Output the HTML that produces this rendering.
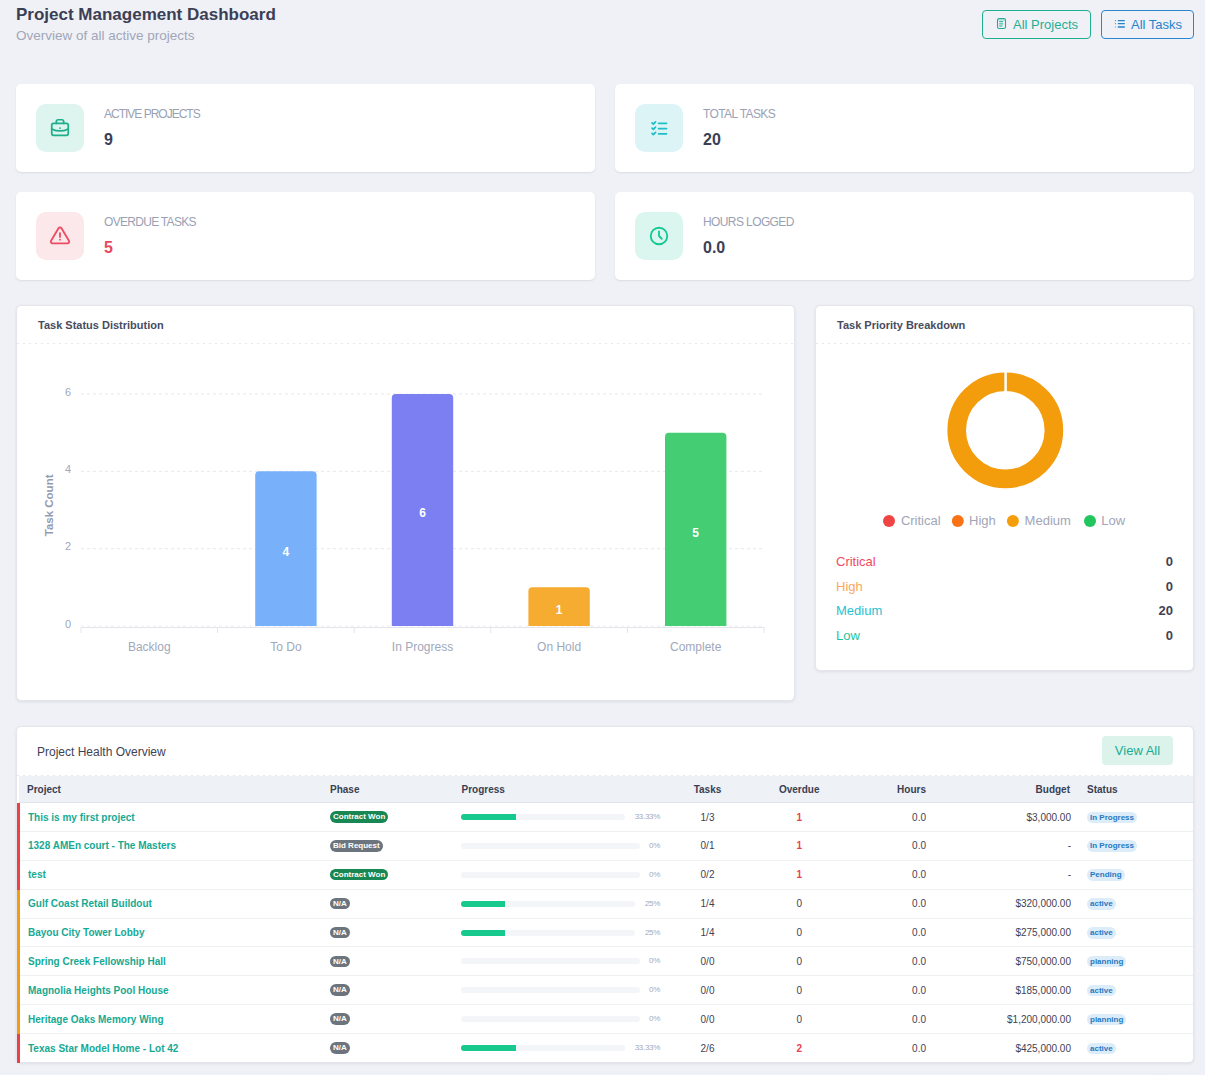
<!DOCTYPE html>
<html><head><meta charset="utf-8">
<style>
*{box-sizing:border-box;margin:0;padding:0}
html,body{width:1205px;height:1075px;overflow:hidden}
body{background:#f0f1f6;font-family:"Liberation Sans",sans-serif;color:#3f4254;position:relative}
.a{position:absolute;white-space:nowrap}
.card{position:absolute;background:#fff;border-radius:5px;box-shadow:0 1px 2px rgba(30,35,60,.10)}
.bcard{position:absolute;background:#fff;border-radius:5px;border:1px solid #e4e6eb;box-shadow:0 1px 3px rgba(30,35,60,.09)}
.ib{position:absolute;left:20px;top:20px;width:48px;height:48px;border-radius:10px}
.ib svg{position:absolute;left:12px;top:12px}
.lbl{position:absolute;left:88px;font-size:12px;color:#9aa1b4;letter-spacing:-0.6px;line-height:12px;top:23.8px}
.val{position:absolute;left:88px;font-size:16px;font-weight:bold;color:#3a3f56;line-height:16px;top:48px}
.btn{position:absolute;top:10px;height:29px;border:1px solid;border-radius:4px;font-size:13px;line-height:27px}
.btn svg{position:absolute}
.btn span{position:absolute}
.ctitle{position:absolute;left:20px;top:14px;font-size:11px;font-weight:bold;color:#484c60;line-height:11px}
.dash{position:absolute;left:0;right:0;height:1px;background-image:linear-gradient(to right,#e5e7eb 2.5px,transparent 2.5px);background-size:6px 1px}
.th{font-size:10px;font-weight:bold;color:#3a3f52;line-height:10px}
.td{font-size:10px;line-height:10px;color:#3f4254}
.pn{font-weight:bold;color:#16a993}
.bdg{font-size:8px;font-weight:bold;line-height:11.5px;height:11.5px;padding:0 3px;border-radius:6px}
.pct{font-size:8px;line-height:8px;letter-spacing:-0.3px;color:#a5a9b9}
</style></head><body>

<!-- Header -->
<div class="a" style="left:16px;top:6px;font-size:17px;font-weight:bold;line-height:17px;color:#3b3f55">Project Management Dashboard</div>
<div class="a" style="left:16px;top:29px;font-size:13.5px;line-height:14px;color:#a1a6b8">Overview of all active projects</div>

<div class="btn" style="left:982px;width:109px;border-color:#21ad8f;color:#1fae93">
  <svg style="left:13px;top:6px" width="12" height="13" viewBox="996 17 12 13"><rect x="997.5" y="18.5" width="8" height="10" rx="1.6" fill="none" stroke="#1fae93" stroke-width="1.1"/><rect x="998" y="19" width="7" height="1.6" fill="#1fae93" opacity=".35"/><path d="M999.2 21.7h3.9M999.2 23.9h3.9M999.2 26h3.2" stroke="#1fae93" stroke-width="1"/></svg>
  <span style="left:30px;top:0">All Projects</span>
</div>
<div class="btn" style="left:1101px;width:93px;border-color:#2b86cf;color:#2384cc">
  <svg style="left:11px;top:6px" width="12" height="13" viewBox="1113 17 12 13"><path d="M1117.8 20.6h7M1117.8 23.6h7M1117.8 27h7" stroke="#2384cc" stroke-width="1.3"/><path d="M1114.9 20.6h1M1114.9 23.6h1M1114.9 27h1" stroke="#2384cc" stroke-width="1.2" opacity=".8"/></svg>
  <span style="left:29px;top:0">All Tasks</span>
</div>

<!-- Stat cards -->
<div class="card" style="left:16px;top:84px;width:579px;height:88px">
  <div class="ib" style="background:#def4ee">
    <svg style="left:13px;top:13px" width="22" height="22" viewBox="0 0 24 24" fill="none" stroke="#1dae8c" stroke-width="1.9" stroke-linecap="round" stroke-linejoin="round"><path d="M3 9a2 2 0 0 1 2 -2h14a2 2 0 0 1 2 2v9a2 2 0 0 1 -2 2h-14a2 2 0 0 1 -2 -2v-9z"/><path d="M8 7v-2a2 2 0 0 1 2 -2h4a2 2 0 0 1 2 2v2"/><path d="M12 12l0 .01"/><path d="M3 13a20 20 0 0 0 18 0"/></svg>
  </div>
  <div class="lbl" style="letter-spacing:-1px">ACTIVE PROJECTS</div>
  <div class="val">9</div>
</div>
<div class="card" style="left:615px;top:84px;width:579px;height:88px">
  <div class="ib" style="background:#ddf4f7">
    <svg style="left:14px;top:13.6px" width="21" height="21" viewBox="0 0 24 24" fill="none" stroke="#1bbfc6" stroke-width="2" stroke-linecap="round" stroke-linejoin="round"><path d="M3.5 5.5l1.5 1.5l2.5 -2.5"/><path d="M3.5 11.5l1.5 1.5l2.5 -2.5"/><path d="M3.5 17.5l1.5 1.5l2.5 -2.5"/><path d="M11 6l9 0"/><path d="M11 12l9 0"/><path d="M11 18l9 0"/></svg>
  </div>
  <div class="lbl">TOTAL TASKS</div>
  <div class="val">20</div>
</div>
<div class="card" style="left:16px;top:192px;width:579px;height:88px">
  <div class="ib" style="background:#fce7ea">
    <svg style="left:13px;top:12.6px" width="22" height="22" viewBox="0 0 24 24" fill="none" stroke="#eb4d61" stroke-width="2" stroke-linecap="round" stroke-linejoin="round"><path d="M12 9v4"/><path d="M10.363 3.591l-8.106 13.534a1.914 1.914 0 0 0 1.636 2.871h16.214a1.914 1.914 0 0 0 1.636 -2.87l-8.106 -13.536a1.914 1.914 0 0 0 -3.274 0z"/><path d="M12 16h.01"/></svg>
  </div>
  <div class="lbl" style="letter-spacing:-0.7px">OVERDUE TASKS</div>
  <div class="val" style="color:#e8485f">5</div>
</div>
<div class="card" style="left:615px;top:192px;width:579px;height:88px">
  <div class="ib" style="background:#dbf6ee">
    <svg style="left:13.4px;top:13px" width="22" height="22" viewBox="0 0 24 24" fill="none" stroke="#14c990" stroke-width="2" stroke-linecap="round" stroke-linejoin="round"><path d="M3 12a9 9 0 1 0 18 0a9 9 0 0 0 -18 0"/><path d="M12 7v5l3 3"/></svg>
  </div>
  <div class="lbl">HOURS LOGGED</div>
  <div class="val">0.0</div>
</div>

<!-- CHART_CARD -->
<div class="bcard" style="left:16px;top:305px;width:779px;height:396px">
  <div class="ctitle" style="left:21px;top:14px">Task Status Distribution</div>
  <div class="dash" style="top:37px"></div>
</div>
<svg class="a" style="left:0;top:0" width="1205" height="1075" viewBox="0 0 1205 1075">
<line x1="81" y1="394.0" x2="764" y2="394.0" stroke="#e6e8ed" stroke-width="1" stroke-dasharray="3 3"/>
<line x1="81" y1="471.3" x2="764" y2="471.3" stroke="#e6e8ed" stroke-width="1" stroke-dasharray="3 3"/>
<line x1="81" y1="548.7" x2="764" y2="548.7" stroke="#e6e8ed" stroke-width="1" stroke-dasharray="3 3"/>
<line x1="81" y1="626.0" x2="764" y2="626.0" stroke="#eceef2" stroke-width="1" stroke-dasharray="3 3"/>
<path d="M255.20 626 V475.33 Q255.20 471.33 259.20 471.33 H312.60 Q316.60 471.33 316.60 475.33 V626 Z" fill="#78b1fa"/>
<text x="285.9" y="555.9" text-anchor="middle" font-size="12" font-weight="bold" fill="#fff">4</text>
<path d="M391.80 626 V398.00 Q391.80 394.00 395.80 394.00 H449.20 Q453.20 394.00 453.20 398.00 V626 Z" fill="#7b7ff2"/>
<text x="422.5" y="517.2" text-anchor="middle" font-size="12" font-weight="bold" fill="#fff">6</text>
<path d="M528.40 626 V591.33 Q528.40 587.33 532.40 587.33 H585.80 Q589.80 587.33 589.80 591.33 V626 Z" fill="#f6ac31"/>
<text x="559.1" y="613.9" text-anchor="middle" font-size="12" font-weight="bold" fill="#fff">1</text>
<path d="M665.00 626 V436.67 Q665.00 432.67 669.00 432.67 H722.40 Q726.40 432.67 726.40 436.67 V626 Z" fill="#45cd73"/>
<text x="695.7" y="536.5" text-anchor="middle" font-size="12" font-weight="bold" fill="#fff">5</text>
<line x1="81" y1="627.5" x2="764" y2="627.5" stroke="#e3e5ea" stroke-width="1"/>
<line x1="81.0" y1="627" x2="81.0" y2="633" stroke="#e3e5ea" stroke-width="1"/>
<line x1="217.6" y1="627" x2="217.6" y2="633" stroke="#e3e5ea" stroke-width="1"/>
<line x1="354.2" y1="627" x2="354.2" y2="633" stroke="#e3e5ea" stroke-width="1"/>
<line x1="490.8" y1="627" x2="490.8" y2="633" stroke="#e3e5ea" stroke-width="1"/>
<line x1="627.4" y1="627" x2="627.4" y2="633" stroke="#e3e5ea" stroke-width="1"/>
<line x1="764.0" y1="627" x2="764.0" y2="633" stroke="#e3e5ea" stroke-width="1"/>
<text x="149.3" y="651" text-anchor="middle" font-size="12" fill="#a1a8bb">Backlog</text>
<text x="285.9" y="651" text-anchor="middle" font-size="12" fill="#a1a8bb">To Do</text>
<text x="422.5" y="651" text-anchor="middle" font-size="12" fill="#a1a8bb">In Progress</text>
<text x="559.1" y="651" text-anchor="middle" font-size="12" fill="#a1a8bb">On Hold</text>
<text x="695.7" y="651" text-anchor="middle" font-size="12" fill="#a1a8bb">Complete</text>
<text x="71" y="395.5" text-anchor="end" font-size="11" fill="#a1a8bb">6</text>
<text x="71" y="472.8" text-anchor="end" font-size="11" fill="#a1a8bb">4</text>
<text x="71" y="550.2" text-anchor="end" font-size="11" fill="#a1a8bb">2</text>
<text x="71" y="627.5" text-anchor="end" font-size="11" fill="#a1a8bb">0</text>
<text transform="translate(53,505.4) rotate(-90)" text-anchor="middle" font-size="11.5" font-weight="bold" fill="#939ab0">Task Count</text>
</svg>
<!-- /CHART_CARD -->

<!-- PRIORITY_CARD -->
<div class="bcard" style="left:815px;top:305px;width:379px;height:366px">
  <div class="ctitle" style="left:21px;top:14px">Task Priority Breakdown</div>
  <div class="dash" style="top:37px"></div>
</div>
<svg class="a" style="left:815px;top:305px" width="379" height="366" viewBox="815 305 379 366">
<circle cx="1005.3" cy="430.3" r="48.60" fill="none" stroke="#f39c0c" stroke-width="18.60"/>
<line x1="1005.6" y1="371.4" x2="1005.6" y2="392" stroke="#fff" stroke-width="2.5"/>
<circle cx="889.0" cy="521" r="6" fill="#ef4444"/>
<text x="900.9" y="525.3" font-size="13" fill="#a1a5b7">Critical</text>
<circle cx="957.8" cy="521" r="6" fill="#f97316"/>
<text x="969.0" y="525.3" font-size="13" fill="#a1a5b7">High</text>
<circle cx="1012.9" cy="521" r="6" fill="#f59e0b"/>
<text x="1024.6" y="525.3" font-size="13" fill="#a1a5b7">Medium</text>
<circle cx="1090.0" cy="521" r="6" fill="#22c55e"/>
<text x="1101.2" y="525.3" font-size="13" fill="#a1a5b7">Low</text>
<text x="836" y="565.9" font-size="13" fill="#ee4a62">Critical</text>
<text x="1173" y="565.9" text-anchor="end" font-size="13" font-weight="bold" fill="#3f4254">0</text>
<text x="836" y="590.6" font-size="13" fill="#fba75c">High</text>
<text x="1173" y="590.6" text-anchor="end" font-size="13" font-weight="bold" fill="#3f4254">0</text>
<text x="836" y="615.0" font-size="13" fill="#29c2d1">Medium</text>
<text x="1173" y="615.0" text-anchor="end" font-size="13" font-weight="bold" fill="#3f4254">20</text>
<text x="836" y="639.9" font-size="13" fill="#1cc59f">Low</text>
<text x="1173" y="639.9" text-anchor="end" font-size="13" font-weight="bold" fill="#3f4254">0</text>
</svg>
<!-- /PRIORITY_CARD -->

<!-- TABLE_CARD -->
<div class="bcard" style="left:16px;top:726px;width:1178px;height:337px;overflow:hidden">
  <div class="a" style="left:20px;top:19px;font-size:12px;line-height:12px;color:#3f4254">Project Health Overview</div>
  <div class="a" style="left:1085px;top:9px;width:71px;height:29px;border-radius:4px;background:#dcf3ec;color:#19ad92;font-size:13px;line-height:29px;text-align:center">View All</div>
  <div class="dash" style="top:48px"></div>
</div>
<div class="a" style="left:19px;top:776px;width:1174px;height:27px;background:#eef1f6;border-bottom:1px solid #dfe3ea"></div>
<div class="a th" style="left:27px;top:784.5px">Project</div>
<div class="a th" style="left:330px;top:784.5px">Phase</div>
<div class="a th" style="left:461.5px;top:784.5px">Progress</div>
<div class="a th" style="left:647.5px;width:120px;text-align:center;top:784.5px">Tasks</div>
<div class="a th" style="left:739.2px;width:120px;text-align:center;top:784.5px">Overdue</div>
<div class="a th" style="left:806px;width:120px;text-align:right;top:784.5px">Hours</div>
<div class="a th" style="left:950px;width:120px;text-align:right;top:784.5px">Budget</div>
<div class="a th" style="left:1087px;top:784.5px">Status</div>
<div class="a" style="left:20px;top:803.000px;width:1173px;height:28.875px;border-bottom:1px solid #eef0f4;"></div><div class="a" style="left:17px;top:803.000px;width:3px;height:28.875px;background:#ee3e46"></div>
<div class="a td pn" style="left:28px;top:812.500px">This is my first project</div>
<div class="a bdg" style="left:330px;top:811.200px;background:#198754;color:#fff">Contract Won</div>
<div class="a" style="left:461px;top:814.000px;width:163.8px;height:6px;border-radius:3px;background:#f4f5f9;overflow:hidden"><div style="width:33.33%;height:6px;background:#17c98d"></div></div>
<div class="a pct" style="left:560px;width:100px;text-align:right;top:813.000px">33.33%</div>
<div class="a td" style="left:647.5px;width:120px;text-align:center;top:812.500px">1/3</div>
<div class="a td" style="left:739.2px;width:120px;text-align:center;top:812.500px;color:#ee3d4f;font-weight:bold">1</div>
<div class="a td" style="left:806px;width:120px;text-align:right;top:812.500px">0.0</div>
<div class="a td" style="left:871px;width:200px;text-align:right;top:812.500px">$3,000.00</div>
<div class="a bdg" style="left:1087px;top:811.500px;background:#dcecf8;color:#2679c2">In Progress</div>
<div class="a" style="left:20px;top:831.875px;width:1173px;height:28.875px;border-bottom:1px solid #eef0f4;"></div><div class="a" style="left:17px;top:831.875px;width:3px;height:28.875px;background:#ee3e46"></div>
<div class="a td pn" style="left:28px;top:841.375px">1328 AMEn court - The Masters</div>
<div class="a bdg" style="left:330px;top:840.075px;background:#6c757d;color:#fff">Bid Request</div>
<div class="a" style="left:461px;top:842.875px;width:178.5px;height:6px;border-radius:3px;background:#f4f5f9;overflow:hidden"><div style="width:0%;height:6px;background:#17c98d"></div></div>
<div class="a pct" style="left:560px;width:100px;text-align:right;top:841.875px">0%</div>
<div class="a td" style="left:647.5px;width:120px;text-align:center;top:841.375px">0/1</div>
<div class="a td" style="left:739.2px;width:120px;text-align:center;top:841.375px;color:#ee3d4f;font-weight:bold">1</div>
<div class="a td" style="left:806px;width:120px;text-align:right;top:841.375px">0.0</div>
<div class="a td" style="left:871px;width:200px;text-align:right;top:841.375px">-</div>
<div class="a bdg" style="left:1087px;top:840.375px;background:#dcecf8;color:#2679c2">In Progress</div>
<div class="a" style="left:20px;top:860.750px;width:1173px;height:28.875px;border-bottom:1px solid #eef0f4;"></div><div class="a" style="left:17px;top:860.750px;width:3px;height:28.875px;background:#ee3e46"></div>
<div class="a td pn" style="left:28px;top:870.250px">test</div>
<div class="a bdg" style="left:330px;top:868.950px;background:#198754;color:#fff">Contract Won</div>
<div class="a" style="left:461px;top:871.750px;width:178.5px;height:6px;border-radius:3px;background:#f4f5f9;overflow:hidden"><div style="width:0%;height:6px;background:#17c98d"></div></div>
<div class="a pct" style="left:560px;width:100px;text-align:right;top:870.750px">0%</div>
<div class="a td" style="left:647.5px;width:120px;text-align:center;top:870.250px">0/2</div>
<div class="a td" style="left:739.2px;width:120px;text-align:center;top:870.250px;color:#ee3d4f;font-weight:bold">1</div>
<div class="a td" style="left:806px;width:120px;text-align:right;top:870.250px">0.0</div>
<div class="a td" style="left:871px;width:200px;text-align:right;top:870.250px">-</div>
<div class="a bdg" style="left:1087px;top:869.250px;background:#dcecf8;color:#2679c2">Pending</div>
<div class="a" style="left:20px;top:889.625px;width:1173px;height:28.875px;border-bottom:1px solid #eef0f4;"></div><div class="a" style="left:17px;top:889.625px;width:3px;height:28.875px;background:#f39c12"></div>
<div class="a td pn" style="left:28px;top:899.125px">Gulf Coast Retail Buildout</div>
<div class="a bdg" style="left:330px;top:897.825px;background:#6c757d;color:#fff">N/A</div>
<div class="a" style="left:461px;top:900.625px;width:174.0px;height:6px;border-radius:3px;background:#f4f5f9;overflow:hidden"><div style="width:25%;height:6px;background:#17c98d"></div></div>
<div class="a pct" style="left:560px;width:100px;text-align:right;top:899.625px">25%</div>
<div class="a td" style="left:647.5px;width:120px;text-align:center;top:899.125px">1/4</div>
<div class="a td" style="left:739.2px;width:120px;text-align:center;top:899.125px;">0</div>
<div class="a td" style="left:806px;width:120px;text-align:right;top:899.125px">0.0</div>
<div class="a td" style="left:871px;width:200px;text-align:right;top:899.125px">$320,000.00</div>
<div class="a bdg" style="left:1087px;top:898.125px;background:#dcecf8;color:#2679c2">active</div>
<div class="a" style="left:20px;top:918.500px;width:1173px;height:28.875px;border-bottom:1px solid #eef0f4;"></div><div class="a" style="left:17px;top:918.500px;width:3px;height:28.875px;background:#f39c12"></div>
<div class="a td pn" style="left:28px;top:928.000px">Bayou City Tower Lobby</div>
<div class="a bdg" style="left:330px;top:926.700px;background:#6c757d;color:#fff">N/A</div>
<div class="a" style="left:461px;top:929.500px;width:174.0px;height:6px;border-radius:3px;background:#f4f5f9;overflow:hidden"><div style="width:25%;height:6px;background:#17c98d"></div></div>
<div class="a pct" style="left:560px;width:100px;text-align:right;top:928.500px">25%</div>
<div class="a td" style="left:647.5px;width:120px;text-align:center;top:928.000px">1/4</div>
<div class="a td" style="left:739.2px;width:120px;text-align:center;top:928.000px;">0</div>
<div class="a td" style="left:806px;width:120px;text-align:right;top:928.000px">0.0</div>
<div class="a td" style="left:871px;width:200px;text-align:right;top:928.000px">$275,000.00</div>
<div class="a bdg" style="left:1087px;top:927.000px;background:#dcecf8;color:#2679c2">active</div>
<div class="a" style="left:20px;top:947.375px;width:1173px;height:28.875px;border-bottom:1px solid #eef0f4;"></div><div class="a" style="left:17px;top:947.375px;width:3px;height:28.875px;background:#f39c12"></div>
<div class="a td pn" style="left:28px;top:956.875px">Spring Creek Fellowship Hall</div>
<div class="a bdg" style="left:330px;top:955.575px;background:#6c757d;color:#fff">N/A</div>
<div class="a" style="left:461px;top:958.375px;width:178.5px;height:6px;border-radius:3px;background:#f4f5f9;overflow:hidden"><div style="width:0%;height:6px;background:#17c98d"></div></div>
<div class="a pct" style="left:560px;width:100px;text-align:right;top:957.375px">0%</div>
<div class="a td" style="left:647.5px;width:120px;text-align:center;top:956.875px">0/0</div>
<div class="a td" style="left:739.2px;width:120px;text-align:center;top:956.875px;">0</div>
<div class="a td" style="left:806px;width:120px;text-align:right;top:956.875px">0.0</div>
<div class="a td" style="left:871px;width:200px;text-align:right;top:956.875px">$750,000.00</div>
<div class="a bdg" style="left:1087px;top:955.875px;background:#dcecf8;color:#2679c2">planning</div>
<div class="a" style="left:20px;top:976.250px;width:1173px;height:28.875px;border-bottom:1px solid #eef0f4;"></div><div class="a" style="left:17px;top:976.250px;width:3px;height:28.875px;background:#f39c12"></div>
<div class="a td pn" style="left:28px;top:985.750px">Magnolia Heights Pool House</div>
<div class="a bdg" style="left:330px;top:984.450px;background:#6c757d;color:#fff">N/A</div>
<div class="a" style="left:461px;top:987.250px;width:178.5px;height:6px;border-radius:3px;background:#f4f5f9;overflow:hidden"><div style="width:0%;height:6px;background:#17c98d"></div></div>
<div class="a pct" style="left:560px;width:100px;text-align:right;top:986.250px">0%</div>
<div class="a td" style="left:647.5px;width:120px;text-align:center;top:985.750px">0/0</div>
<div class="a td" style="left:739.2px;width:120px;text-align:center;top:985.750px;">0</div>
<div class="a td" style="left:806px;width:120px;text-align:right;top:985.750px">0.0</div>
<div class="a td" style="left:871px;width:200px;text-align:right;top:985.750px">$185,000.00</div>
<div class="a bdg" style="left:1087px;top:984.750px;background:#dcecf8;color:#2679c2">active</div>
<div class="a" style="left:20px;top:1005.125px;width:1173px;height:28.875px;border-bottom:1px solid #eef0f4;"></div><div class="a" style="left:17px;top:1005.125px;width:3px;height:28.875px;background:#f39c12"></div>
<div class="a td pn" style="left:28px;top:1014.625px">Heritage Oaks Memory Wing</div>
<div class="a bdg" style="left:330px;top:1013.325px;background:#6c757d;color:#fff">N/A</div>
<div class="a" style="left:461px;top:1016.125px;width:178.5px;height:6px;border-radius:3px;background:#f4f5f9;overflow:hidden"><div style="width:0%;height:6px;background:#17c98d"></div></div>
<div class="a pct" style="left:560px;width:100px;text-align:right;top:1015.125px">0%</div>
<div class="a td" style="left:647.5px;width:120px;text-align:center;top:1014.625px">0/0</div>
<div class="a td" style="left:739.2px;width:120px;text-align:center;top:1014.625px;">0</div>
<div class="a td" style="left:806px;width:120px;text-align:right;top:1014.625px">0.0</div>
<div class="a td" style="left:871px;width:200px;text-align:right;top:1014.625px">$1,200,000.00</div>
<div class="a bdg" style="left:1087px;top:1013.625px;background:#dcecf8;color:#2679c2">planning</div>
<div class="a" style="left:20px;top:1034.000px;width:1173px;height:28.875px;"></div><div class="a" style="left:17px;top:1034.000px;width:3px;height:28.875px;background:#ee3e46"></div>
<div class="a td pn" style="left:28px;top:1043.500px">Texas Star Model Home - Lot 42</div>
<div class="a bdg" style="left:330px;top:1042.200px;background:#6c757d;color:#fff">N/A</div>
<div class="a" style="left:461px;top:1045.000px;width:163.8px;height:6px;border-radius:3px;background:#f4f5f9;overflow:hidden"><div style="width:33.33%;height:6px;background:#17c98d"></div></div>
<div class="a pct" style="left:560px;width:100px;text-align:right;top:1044.000px">33.33%</div>
<div class="a td" style="left:647.5px;width:120px;text-align:center;top:1043.500px">2/6</div>
<div class="a td" style="left:739.2px;width:120px;text-align:center;top:1043.500px;color:#ee3d4f;font-weight:bold">2</div>
<div class="a td" style="left:806px;width:120px;text-align:right;top:1043.500px">0.0</div>
<div class="a td" style="left:871px;width:200px;text-align:right;top:1043.500px">$425,000.00</div>
<div class="a bdg" style="left:1087px;top:1042.500px;background:#dcecf8;color:#2679c2">active</div>
<!-- /TABLE_CARD -->

<div class="a" style="left:1138px;top:1084px;width:46px;height:46px;border-radius:50%;background:#f0f1f6;box-shadow:0 0 14px rgba(50,60,90,.10)"></div>
</body></html>
